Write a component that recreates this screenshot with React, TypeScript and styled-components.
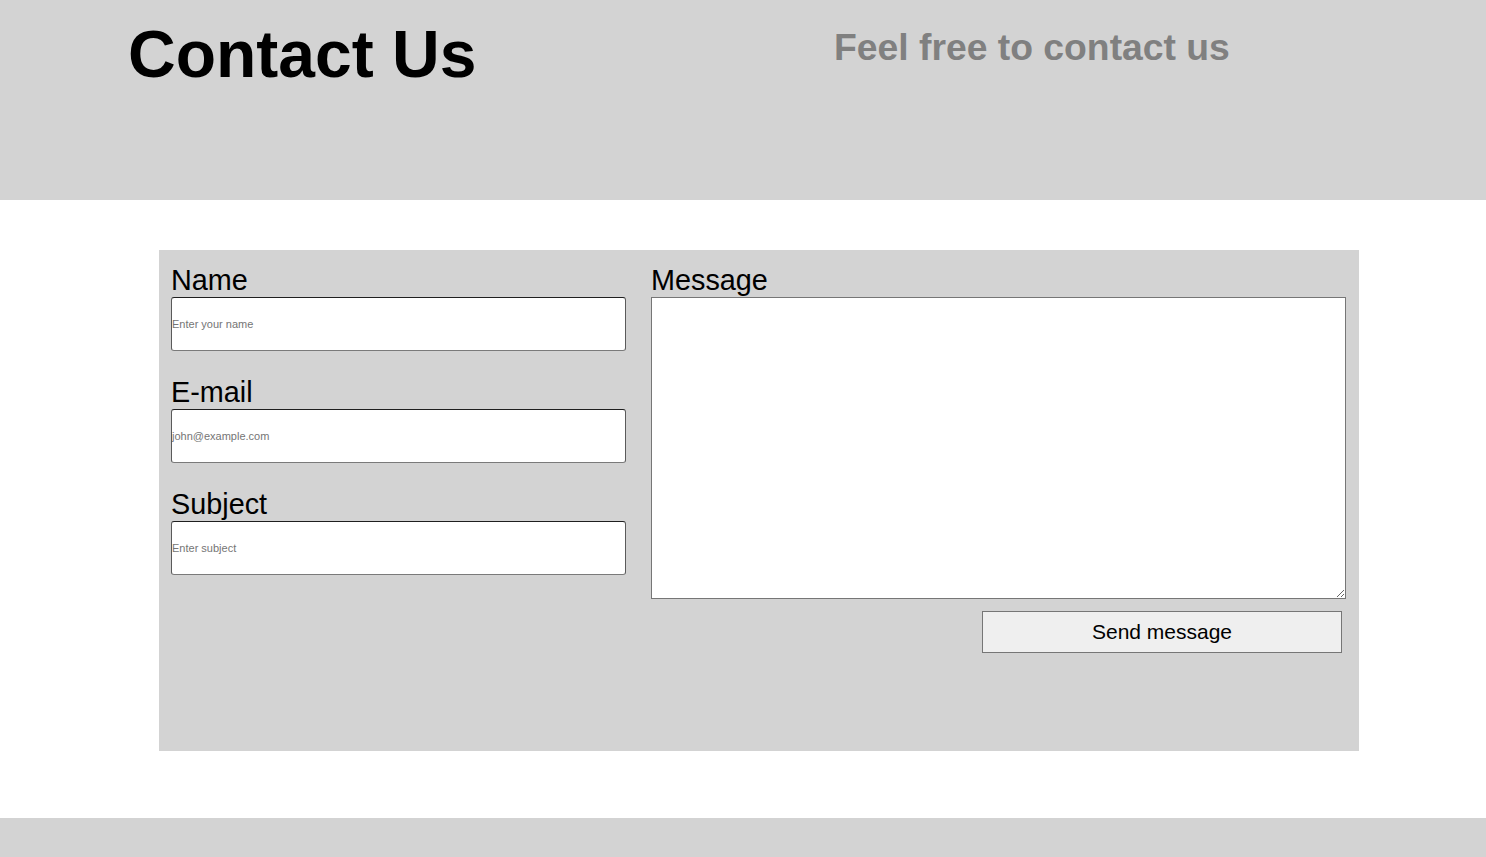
import React from "react";
import styled, { createGlobalStyle } from "styled-components";

const GlobalStyle = createGlobalStyle`
  html, body {
    margin: 0;
    padding: 0;
    background: #ffffff;
    font-family: "Liberation Sans", Arial, sans-serif;
  }
`;

const Header = styled.header`
  height: 200px;
  background: #d3d3d3;
  display: grid;
  grid-template-columns: 706px 1fr;
  align-items: start;
  padding-left: 128px;
  box-sizing: border-box;
`;

const Title = styled.h1`
  margin: 16px 0 0;
  font-size: 66px;
  font-weight: bold;
  color: #000;
  line-height: normal;
`;

const Tagline = styled.h2`
  margin: 26px 0 0;
  font-size: 37.3px;
  font-weight: bold;
  color: #808080;
  line-height: normal;
`;

const Main = styled.main`
  padding: 50px 0 67px 159px;
`;

const Form = styled.form`
  width: 1200px;
  height: 501px;
  box-sizing: border-box;
  background: #d3d3d3;
  padding: 14px 13px 12px 12px;
  display: grid;
  grid-template-columns: 455px 1fr;
  column-gap: 25px;
  align-items: start;
`;

const Column = styled.div`
  display: flex;
  flex-direction: column;
`;

const Field = styled.div`
  display: flex;
  flex-direction: column;
  margin-bottom: 25px;
`;

const Label = styled.label`
  font-size: 28.8px;
  line-height: 33px;
  color: #000;
`;

const TextInput = styled.input`
  height: 54px;
  box-sizing: border-box;
  padding: 0;
  margin: 0;
  border: 1px solid;
  border-color: #1f1f1f #5a5a5a #7a7a7a #5a5a5a;
  border-radius: 3px;
  background: #fff;
  font-family: "Liberation Sans", Arial, sans-serif;
  font-size: 11px;
  color: #000;
  &::placeholder {
    color: #757575;
  }
`;

const MessageArea = styled.textarea`
  display: block;
  height: 302px;
  box-sizing: border-box;
  margin: 0;
  border: 1px solid #767676;
  border-radius: 0;
  background: #fff;
  font-family: "Liberation Mono", monospace;
  font-size: 13px;
  resize: both;
`;

const ButtonRow = styled.div`
  display: flex;
  justify-content: flex-end;
  margin-top: 12px;
  padding-right: 4px;
`;

const SendButton = styled.button`
  width: 360px;
  height: 42px;
  box-sizing: border-box;
  background: #efefef;
  border: 1px solid #767676;
  border-radius: 0;
  font-family: "Liberation Sans", Arial, sans-serif;
  font-size: 21px;
  color: #000;
  cursor: pointer;
`;

const Footer = styled.footer`
  height: 39px;
  background: #d3d3d3;
`;

export default function App() {
  return (
    <>
      <GlobalStyle />
      <Header>
        <Title>Contact Us</Title>
        <Tagline>Feel free to contact us</Tagline>
      </Header>
      <Main>
        <Form onSubmit={(e) => e.preventDefault()}>
          <Column>
            <Field>
              <Label htmlFor="name">Name</Label>
              <TextInput id="name" type="text" placeholder="Enter your name" />
            </Field>
            <Field>
              <Label htmlFor="email">E-mail</Label>
              <TextInput id="email" type="email" placeholder="john@example.com" />
            </Field>
            <Field>
              <Label htmlFor="subject">Subject</Label>
              <TextInput id="subject" type="text" placeholder="Enter subject" />
            </Field>
          </Column>
          <Column>
            <Label htmlFor="message">Message</Label>
            <MessageArea id="message" />
            <ButtonRow>
              <SendButton type="submit">Send message</SendButton>
            </ButtonRow>
          </Column>
        </Form>
      </Main>
      <Footer />
    </>
  );
}
